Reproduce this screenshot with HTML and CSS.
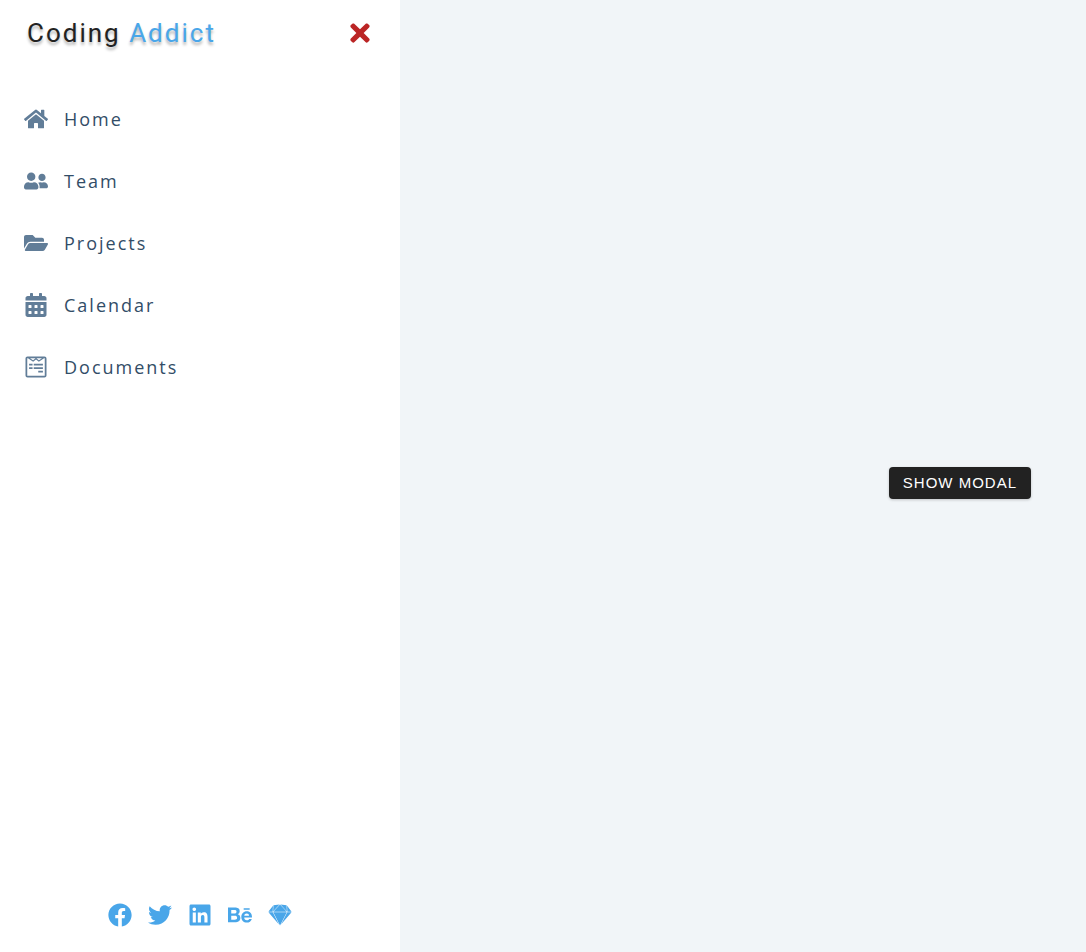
FILE: index.html
```
<!DOCTYPE html>
<html lang="en">
<head>
<meta charset="utf-8">
<meta name="viewport" content="width=device-width, initial-scale=1">
<title>Coding Addict</title>
<link rel="stylesheet" href="styles.css">
</head>
<body>
<div class="layout">
  <aside class="sidebar">
    <header class="sidebar-header">
      <a class="logo" href="#">Coding <span class="logo-accent">Addict</span></a>
      <button class="close-btn" type="button" aria-label="Close sidebar">
        <svg class="close-icon" viewBox="0 0 352 512" aria-hidden="true"><path d="M242.72 256l100.07-100.07c12.28-12.28 12.28-32.19 0-44.48l-22.24-22.24c-12.28-12.28-32.19-12.28-44.48 0L176 189.28 75.93 89.21c-12.28-12.28-32.19-12.28-44.48 0L9.21 111.45c-12.28 12.28-12.28 32.19 0 44.48L109.28 256 9.21 356.07c-12.28 12.28-12.28 32.19 0 44.48l22.24 22.24c12.28 12.28 32.2 12.28 44.48 0L176 322.72l100.07 100.07c12.28 12.28 32.2 12.28 44.48 0l22.24-22.24c12.28-12.28 12.28-32.19 0-44.48L242.72 256z"/></svg>
      </button>
    </header>
    <nav>
      <ul class="links">
        <li><a class="link" href="#">
          <svg class="icon" viewBox="0 0 576 512" aria-hidden="true"><path d="M280.37 148.26L96 300.11V464a16 16 0 0 0 16 16l112.06-.29a16 16 0 0 0 15.92-16V368a16 16 0 0 1 16-16h64a16 16 0 0 1 16 16v95.64a16 16 0 0 0 16 16.05L464 480a16 16 0 0 0 16-16V300L295.67 148.26a12.19 12.19 0 0 0-15.3 0zM571.6 251.47L488 182.56V44.05a12 12 0 0 0-12-12h-56a12 12 0 0 0-12 12v72.61L318.47 43a48 48 0 0 0-61 0L4.34 251.47a12 12 0 0 0-1.6 16.9l25.5 31A12 12 0 0 0 45.15 301l235.22-193.74a12.19 12.19 0 0 1 15.3 0L530.9 301a12 12 0 0 0 16.9-1.6l25.5-31a12 12 0 0 0-1.7-16.93z"/></svg>
          Home</a></li>
        <li><a class="link" href="#">
          <svg class="icon" viewBox="0 0 640 512" aria-hidden="true"><path d="M192 256c61.9 0 112-50.1 112-112S253.9 32 192 32 80 82.1 80 144s50.1 112 112 112zm76.8 32h-8.3c-20.8 10-43.9 16-68.5 16s-47.6-6-68.5-16h-8.3C51.6 288 0 339.6 0 403.2V432c0 26.5 21.5 48 48 48h288c26.5 0 48-21.5 48-48v-28.8c0-63.6-51.6-115.2-115.2-115.2zM480 256c53 0 96-43 96-96s-43-96-96-96-96 43-96 96 43 96 96 96zm48 32h-3.8c-13.9 4.8-28.6 8-44.2 8s-30.3-3.2-44.2-8H432c-20.4 0-39.2 5.9-55.7 15.4 24.4 26.3 39.7 61.2 39.7 99.8v38.4c0 2.2-.5 4.3-.6 6.4H592c26.5 0 48-21.5 48-48 0-61.9-50.1-112-112-112z"/></svg>
          Team</a></li>
        <li><a class="link" href="#">
          <svg class="icon" viewBox="0 0 576 512" aria-hidden="true"><path d="M572.694 292.093L500.27 416.248A63.997 63.997 0 0 1 444.989 448H45.025c-18.523 0-30.064-20.093-20.731-36.093l72.424-124.155A64 64 0 0 1 152 256h399.964c18.523 0 30.064 20.093 20.73 36.093zM152 224h328v-48c0-26.51-21.49-48-48-48H272l-64-64H48C21.49 64 0 85.49 0 112v278.046l69.077-118.418C86.214 242.25 117.989 224 152 224z"/></svg>
          Projects</a></li>
        <li><a class="link" href="#">
          <svg class="icon" viewBox="0 0 448 512" aria-hidden="true"><path fill-rule="evenodd" d="M0 464c0 26.500 21.500 48 48 48h352c26.500 0 48-21.500 48-48V192H0zM76 256h40a12 12 0 0 1 12 12v40a12 12 0 0 1-12 12H76a12 12 0 0 1-12-12v-40a12 12 0 0 1 12-12zM204 256h40a12 12 0 0 1 12 12v40a12 12 0 0 1-12 12h-40a12 12 0 0 1-12-12v-40a12 12 0 0 1 12-12zM332 256h40a12 12 0 0 1 12 12v40a12 12 0 0 1-12 12h-40a12 12 0 0 1-12-12v-40a12 12 0 0 1 12-12zM76 384h40a12 12 0 0 1 12 12v40a12 12 0 0 1-12 12H76a12 12 0 0 1-12-12v-40a12 12 0 0 1 12-12zM204 384h40a12 12 0 0 1 12 12v40a12 12 0 0 1-12 12h-40a12 12 0 0 1-12-12v-40a12 12 0 0 1 12-12zM332 384h40a12 12 0 0 1 12 12v40a12 12 0 0 1-12 12h-40a12 12 0 0 1-12-12v-40a12 12 0 0 1 12-12zM400 64h-48V16c0-8.800-7.200-16-16-16h-32c-8.800 0-16 7.200-16 16v48H160V16c0-8.800-7.200-16-16-16h-32c-8.800 0-16 7.200-16 16v48H48C21.500 64 0 85.500 0 112v48h448v-48c0-26.500-21.500-48-48-48z"/></svg>
          Calendar</a></li>
        <li><a class="link" href="#">
          <svg class="icon" viewBox="0 0 448 512" aria-hidden="true"><path d="M448 75.2v361.7c0 24.3-19 43.2-43.2 43.2H43.2C19.3 480 0 461.4 0 436.8V75.2C0 51.1 18.8 32 43.2 32h361.7c24 0 43.1 18.8 43.1 43.2zm-37.3 361.6V75.2c0-3-2.6-5.8-5.8-5.8h-9.3L285.3 144 224 94.1 162.8 144 52.5 69.3h-9.3c-3.2 0-5.8 2.8-5.8 5.8v361.7c0 3 2.6 5.8 5.8 5.8h361.7c3.2.1 5.8-2.7 5.8-5.8zM150.2 186v37H76.7v-37h73.5zm0 74.4v37.3H76.7v-37.3h73.5zm11.1-147.3l54-43.7H96.8l64.5 43.7zm210 72.9v37h-196v-37h196zm0 74.4v37.3h-196v-37.3h196zm-84.6-147.3l64.5-43.7H232.8l53.9 43.7zM371.3 335v37.3h-99.4V335h99.4z"/></svg>
          Documents</a></li>
      </ul>
    </nav>
    <ul class="social">
      <li><a class="social-link" href="#" aria-label="Facebook"><svg class="icon" viewBox="0 0 512 512" aria-hidden="true"><path d="M504 256C504 119 393 8 256 8S8 119 8 256c0 123.78 90.69 226.38 209.25 245V327.69h-63V256h63v-54.64c0-62.15 37-96.48 93.67-96.48 27.14 0 55.52 4.84 55.52 4.84v61h-31.28c-30.8 0-40.41 19.12-40.41 38.73V256h68.78l-11 71.69h-57.78V501C413.31 482.38 504 379.78 504 256z"/></svg></a></li>
      <li><a class="social-link" href="#" aria-label="Twitter"><svg class="icon" viewBox="0 0 512 512" aria-hidden="true"><path d="M459.37 151.716c.325 4.548.325 9.097.325 13.645 0 138.72-105.583 298.558-298.558 298.558-59.452 0-114.68-17.219-161.137-47.106 8.447.974 16.568 1.299 25.34 1.299 49.055 0 94.213-16.568 130.274-44.832-46.132-.975-84.792-31.188-98.112-72.772 6.498.974 12.995 1.624 19.818 1.624 9.421 0 18.843-1.3 27.614-3.573-48.081-9.747-84.143-51.98-84.143-102.985v-1.299c13.969 7.797 30.214 12.67 47.431 13.319-28.264-18.843-46.781-51.005-46.781-87.391 0-19.492 5.197-37.36 14.294-52.954 51.655 63.675 129.3 105.258 216.365 109.807-1.624-7.797-2.599-15.918-2.599-24.04 0-57.828 46.782-104.934 104.934-104.934 30.213 0 57.502 12.67 76.67 33.137 23.715-4.548 46.456-13.32 66.599-25.34-7.798 24.366-24.366 44.833-46.132 57.827 21.117-2.273 41.584-8.122 60.426-16.243-14.292 20.791-32.161 39.308-52.628 54.253z"/></svg></a></li>
      <li><a class="social-link" href="#" aria-label="LinkedIn"><svg class="icon" viewBox="0 0 448 512" aria-hidden="true"><path d="M416 32H31.9C14.3 32 0 46.5 0 64.3v383.4C0 465.5 14.3 480 31.9 480H416c17.6 0 32-14.5 32-32.3V64.3c0-17.8-14.4-32.3-32-32.3zM135.4 416H69V202.2h66.5V416zm-33.2-243c-21.3 0-38.5-17.3-38.5-38.5S80.9 96 102.2 96c21.2 0 38.5 17.3 38.5 38.5 0 21.3-17.2 38.5-38.5 38.5zm282.1 243h-66.4V312c0-24.8-.5-56.7-34.5-56.7-34.6 0-39.9 27-39.9 54.9V416h-66.4V202.2h63.7v29.2h.9c8.9-16.8 30.6-34.5 62.9-34.5 67.2 0 79.7 44.3 79.7 101.9V416z"/></svg></a></li>
      <li><a class="social-link" href="#" aria-label="Behance"><svg class="icon" viewBox="0 0 576 512" aria-hidden="true"><path d="M232 237.2c31.8-15.2 48.4-38.2 48.4-74 0-70.6-52.6-87.8-113.3-87.8H0v354.4h171.8c64.4 0 124.9-30.9 124.9-102.9 0-44.5-21.1-77.4-64.7-89.7zM77.9 135.9H151c28.1 0 53.4 7.9 53.4 40.5 0 30.1-19.7 42.2-47.5 42.2h-79v-82.7zm83.3 233.7H77.9V272h84.9c34.3 0 56 14.3 56 50.6 0 35.8-25.9 47-57.6 47zm358.5-240.7H376V94h143.7v34.9zM576 305.2c0-75.9-44.4-139.2-124.9-139.2-78.2 0-131.3 58.8-131.3 135.8 0 79.9 50.3 134.7 131.3 134.7 61.3 0 101-27.6 120.1-86.3H509c-6.7 21.9-34.3 33.5-55.7 33.5-41.3 0-63-24.2-63-65.3h185.1c.3-4.2.6-8.7.6-13.2zM390.4 274c2.3-33.7 24.7-54.8 58.5-54.8 35.4 0 53.2 20.8 56.2 54.8H390.4z"/></svg></a></li>
      <li><a class="social-link" href="#" aria-label="Sketch"><svg class="icon" viewBox="0 0 512 512" aria-hidden="true"><path d="M27.5 162.2L9 187.1h90.5l6.9-130.7-78.9 105.8zM396.3 45.7L267.7 32l135.7 147.2-7.1-133.5zM112.2 218.3l-11.2-22H9.9L234.8 458zm2-31.2h284l-81.5-88.5L256.3 33zm297.3 9.1L277.6 458l224.8-261.7h-90.9zM415.4 69L406 56.4l.9 17.3 6.1 113.4h90.3zM113.5 93.5l-4.6 85.6L244.7 32 116.1 45.7zm287.7 102.700h-290l42.400 82.900L256.300 480l144.900-283.800z"/></svg></a></li>
    </ul>
  </aside>
  <main class="content">
    <button class="btn" type="button">Show Modal</button>
  </main>
</div>
</body>
</html>
```
FILE: styles.css
```
* {
  box-sizing: border-box;
  margin: 0;
  padding: 0;
}

body {
  background: #f1f5f8;
  color: #222;
  font-family: "Open Sans", "Noto Sans", sans-serif;
}

ul {
  list-style: none;
}

.layout {
  display: grid;
  grid-template-columns: minmax(0, 400px) minmax(200px, 1fr);
  min-height: 100vh;
}

.sidebar {
  display: grid;
  grid-template-rows: auto 1fr auto;
  row-gap: 22px;
  background: #fff;
}

.sidebar-header {
  display: flex;
  justify-content: space-between;
  align-items: center;
  padding: 16px 26px 16px 27px;
}

.logo {
  color: #222;
  font-family: Roboto, sans-serif;
  font-size: 26px;
  line-height: 34px;
  letter-spacing: 2px;
  text-decoration: none;
  text-shadow: 0 3px 3px rgba(0, 0, 0, 0.3);
}

.logo-accent {
  color: #49a6e9;
}

.close-btn {
  display: flex;
  border: 0;
  background: transparent;
  color: #bb2525;
  cursor: pointer;
}

.close-icon {
  width: 28px;
  height: 28px;
  fill: currentColor;
}

.icon {
  display: block;
  flex: none;
  width: 24px;
  height: 24px;
  fill: currentColor;
}

.link {
  display: flex;
  align-items: center;
  gap: 16px;
  padding: 16px 24px;
  color: #324d67;
  font-size: 18px;
  line-height: 30px;
  letter-spacing: 2px;
  text-decoration: none;
}

.link .icon {
  color: #617d98;
}

.social {
  display: flex;
  justify-content: center;
  gap: 16px;
  padding-bottom: 25px;
}

.social-link {
  color: #49a6e9;
}

.content {
  display: flex;
  justify-content: flex-end;
  align-items: center;
  padding: 14px 55px 0 0;
}

.btn {
  padding: 6px 14px;
  border: 0;
  border-radius: 4px;
  background: #222;
  box-shadow: 0 1px 3px rgba(0, 0, 0, 0.2);
  color: #fff;
  font-family: "Liberation Sans", Arial, sans-serif;
  font-size: 15px;
  line-height: 20px;
  letter-spacing: 1px;
  text-transform: uppercase;
  cursor: pointer;
}
```
